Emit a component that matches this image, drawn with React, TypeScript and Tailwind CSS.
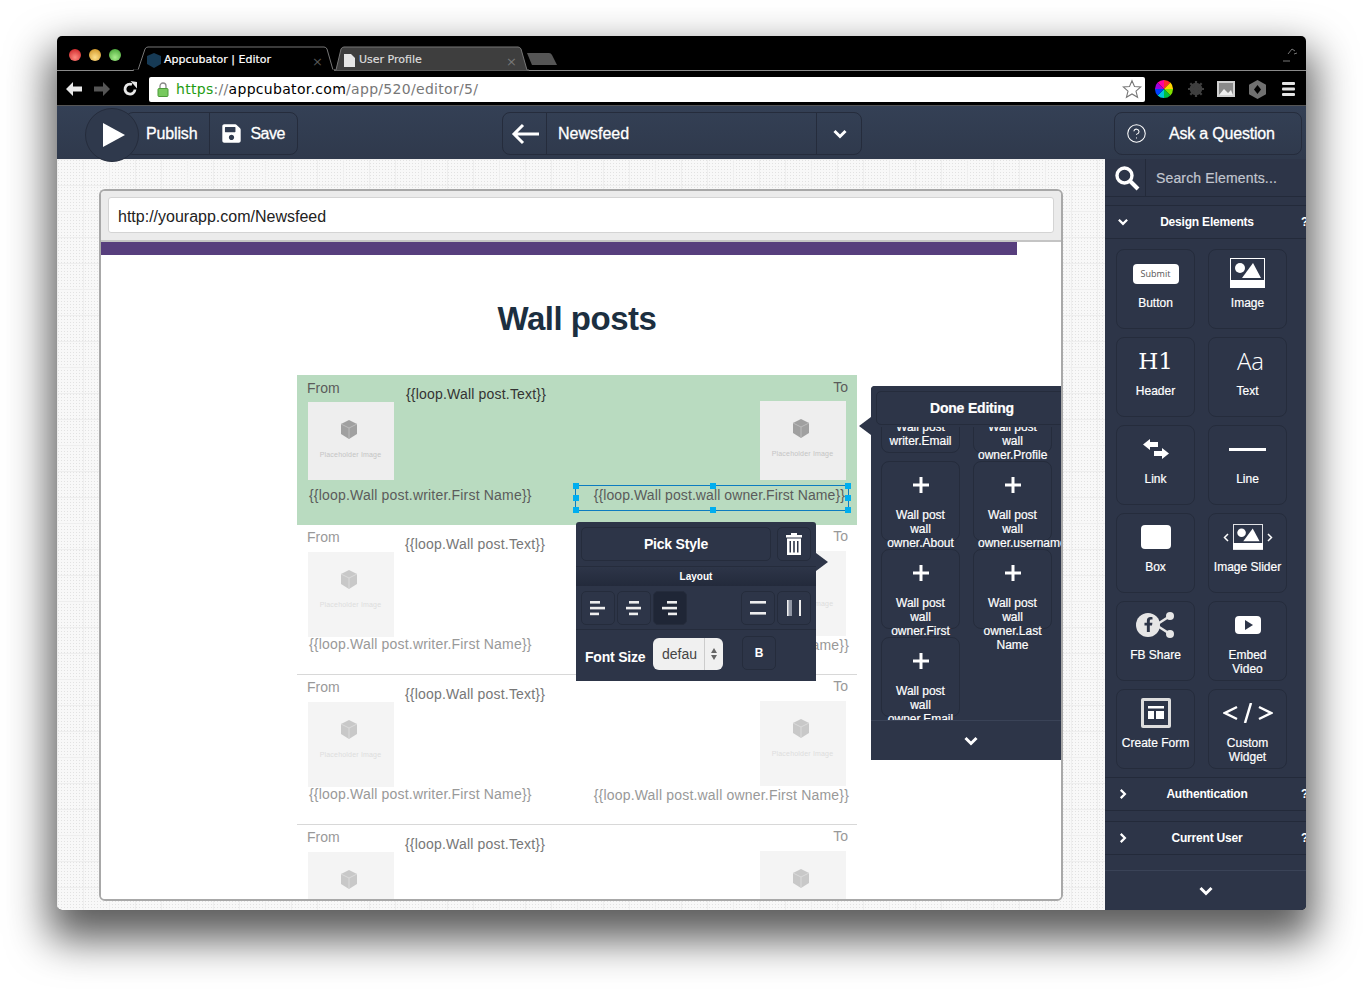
import type { ReactNode } from "react";
import { FaSave, FaFacebookF } from "react-icons/fa";
import { CircleHelp } from "lucide-react";

const Chevron = ({ dir = "down", className = "" }: { dir?: "down" | "right"; className?: string }) => (
  <svg viewBox="0 0 16 16" className={className} fill="none" stroke="white" strokeWidth="3">
    {dir === "down" ? <path d="M2.5 5 8 10.5 13.5 5" /> : <path d="M5 2.5 10.5 8 5 13.5" />}
  </svg>
);

function Tile({ icon, label }: { icon: ReactNode; label: string[] }) {
  return (
    <div className="h-20 w-[79px] rounded-lg border border-[#252c3c] px-[4px] text-center text-xs leading-[14px] text-white [-webkit-text-stroke:0.2px_white]">
      <div className="flex h-[46px] items-center justify-center">{icon}</div>
      {label.map((line) => (
        <div key={line} className="whitespace-nowrap">{line}</div>
      ))}
    </div>
  );
}

const ImageGlyph = ({ w = 35, h = 30 }: { w?: number; h?: number }) => (
  <svg width={w} height={h} viewBox="0 0 35 30">
    <rect width="35" height="30" fill="white" />
    <rect x="1" y="1" width="33" height="21" fill="#2d3548" />
    <circle cx="10" cy="10" r="5" fill="white" />
    <path d="M12 20 23 5 31 20Z" fill="white" />
  </svg>
);

function Placeholder({ height, faded }: { height: number; faded?: boolean }) {
  return (
    <div
      className={`flex w-[86px] flex-col items-center ${faded ? "bg-[#f4f4f4]" : "bg-[#eeeeee]"}`}
      style={{ height }}
    >
      <svg width="18" height="19" viewBox="0 0 18 19" className="-ml-[4px] mt-[18px]">
        <path d="M9 0 17 4 17 14 9 19 1 14 1 4Z" fill={faded ? "#c8c8c8" : "#a0a0a0"} />
        <path d="M1 4 9 8 17 4M9 8V19" fill="none" stroke={faded ? "#dadada" : "#bbbbbb"} strokeWidth="1" />
      </svg>
      <div className={`-ml-[1px] mt-[11px] whitespace-nowrap text-[7px] leading-[9px] ${faded ? "text-[#dddddd]" : "text-[#c4c4c4]"}`}>Placeholder Image</div>
    </div>
  );
}

function WallRow({ selected }: { selected?: boolean }) {
  const tone = selected ? "text-[#5b5b5b]" : "text-[#999999]";
  return (
    <div className={`relative flex h-[150px] border-b tracking-[0.19px] ${selected ? "border-[#b9dbc0] bg-[#b9dbc0]" : "border-[#d8d8d8] bg-white"}`}>
      <div className="w-[108px] shrink-0 pl-[10px]">
        <div className={`h-[27px] text-sm leading-5 tracking-normal ${tone} ${selected ? "pt-[3px]" : "pt-[2px]"}`}>From</div>
        <div className="ml-[1px] h-[85px]">
          <Placeholder height={selected ? 78 : 85} faded={!selected} />
        </div>
        <div className={`ml-[2px] mt-[-3px] whitespace-nowrap text-sm leading-5 ${tone} ${selected ? "pt-[1px]" : ""}`}>
          {"{{loop.Wall post.writer.First Name}}"}
        </div>
      </div>
      <div className={`flex-1 pt-[9px] text-sm leading-5 ${selected ? "pl-[1px] text-[#333333]" : "text-[#777777]"}`}>
        {"{{loop.Wall post.Text}}"}
      </div>
      <div className="flex w-[140px] shrink-0 flex-col items-end pr-[9px]">
        <div className={`h-[26px] text-sm leading-5 tracking-normal ${tone} ${selected ? "pt-[2px]" : "pt-[1px]"}`}>To</div>
        <div className="mr-[2px] h-[85px]">
          <Placeholder height={selected ? 79 : 85} faded={!selected} />
        </div>
        <div className={`-mt-[1px] whitespace-nowrap text-sm leading-5 ${tone} ${selected ? "mr-[3px] tracking-[0.09px]" : "-mr-[1px]"}`}>
          {"{{loop.Wall post.wall owner.First Name}}"}
        </div>
      </div>
      {selected && (
        <div className="absolute left-[278px] top-[110px] h-[26px] w-[274px] border border-[#0c7cc0]">
          {[
            "-left-[3px] -top-[3px]", "left-[134px] -top-[3px]", "-right-[3px] -top-[3px]",
            "-left-[3px] top-[9px]", "-right-[3px] top-[9px]",
            "-left-[3px] -bottom-[3px]", "left-[134px] -bottom-[3px]", "-right-[3px] -bottom-[3px]",
          ].map((pos) => (
            <span key={pos} className={`absolute h-[6px] w-[6px] bg-[#00aeef] ${pos}`} />
          ))}
        </div>
      )}
    </div>
  );
}

const Align = ({ bars }: { bars: [number, number][] }) => (
  <svg width="16" height="16" viewBox="0 0 16 16" fill="#eeeeee">
    {bars.map(([x, w], i) => (
      <rect key={i} x={x} y={1 + i * 5.8} width={w} height="2.6" />
    ))}
  </svg>
);

function SquareBtn({ children, dark }: { children: ReactNode; dark?: boolean }) {
  return (
    <div className={`flex h-[34px] w-[34px] items-center justify-center rounded-[5px] border border-[#252c3c] ${dark ? "bg-[#1f2636]" : ""}`}>
      {children}
    </div>
  );
}

function SidebarSection({ title, open }: { title: string; open?: boolean }) {
  return (
    <div className="relative flex h-[34px] items-center border-y border-[#232a3a] pl-[12px] text-xs font-bold text-white">
      <Chevron dir={open ? "down" : "right"} className="h-3 w-3" />
      <span className="absolute left-0 w-[204px] text-center tracking-[-0.2px]">{title}</span>
      <span className="absolute left-[196px]">?</span>
    </div>
  );
}

export default function App() {
  return (
    <div className="h-[989px] w-[1363px] overflow-hidden bg-white pl-[57px] pt-[36px] font-['Liberation_Sans',sans-serif]">
      <div className="h-[874px] w-[1249px] overflow-hidden rounded-[5px] bg-black shadow-[0_22px_42px_8px_rgba(0,0,0,0.64)]">
        {/* browser tab strip */}
        <div className="relative flex h-[35px] items-end border-b border-[#8a8a8a] pl-[12px]">
          <div className="mb-[9px] flex gap-2">
            <span className="h-3 w-3 rounded-full bg-[radial-gradient(circle_at_50%_70%,#ff8a80,#c8171c)]" />
            <span className="h-3 w-3 rounded-full bg-[radial-gradient(circle_at_50%_70%,#ffe08a,#c98a18)]" />
            <span className="h-3 w-3 rounded-full bg-[radial-gradient(circle_at_50%_70%,#a8ee8c,#3c9c2c)]" />
          </div>
          <div className="relative z-10 -mb-px ml-[12px] flex h-[25px] w-[202px] items-center pt-[4px] font-['DejaVu_Sans',sans-serif] text-[11px] text-white [-webkit-text-stroke:0.2px_white]">
            <svg className="absolute inset-0" width="202" height="25" viewBox="0 0 202 25">
              <path d="M0 24H5L12 3Q13 1 15 1H191Q193 1 194 3L200 24H202V25H0Z" fill="#000" stroke="#777" strokeWidth="1" />
              <path d="M1 24.5H201" stroke="#000" strokeWidth="2" />
            </svg>
            <svg className="relative ml-[14px]" width="14" height="15" viewBox="0 0 14 15">
              <path d="M7 0 14 3V11L7 15 0 11V3Z" fill="#163a55" />
            </svg>
            <span className="relative ml-[3px]">Appcubator | Editor</span>
            <span className="absolute left-[179px] top-[6px] text-[13px] text-[#555555] [-webkit-text-stroke:0px]">×</span>
          </div>
          <div className="relative -mb-px -ml-[4px] flex h-[25px] w-[198px] items-center pt-[4px] font-['DejaVu_Sans',sans-serif] text-[11px] text-[#dddddd] [-webkit-text-stroke:0.2px_#dddddd]">
            <svg className="absolute inset-0" width="198" height="25" viewBox="0 0 198 25">
              <path d="M0 24H5L10 3Q11 1 13 1H187Q189 1 190 3L196 24H198V25H0Z" fill="#3e3e3e" stroke="#777" strokeWidth="1" />
            </svg>
            <svg className="relative ml-[13px]" width="11" height="13" viewBox="0 0 11 13">
              <path d="M0 0H7L11 4V13H0Z" fill="#e6e6e6" />
            </svg>
            <span className="relative ml-[4px]">User Profile</span>
            <span className="absolute left-[175px] top-[6px] text-[13px] text-[#777777] [-webkit-text-stroke:0px]">×</span>
          </div>
          <svg className="-ml-[2px] mb-[4px]" width="32" height="14" viewBox="0 0 32 14">
            <path d="M0 1H22Q24 1 25 3L30 13H5Z" fill="#555555" />
          </svg>
          <svg className="absolute right-[8px] top-[10px]" width="16" height="16" viewBox="0 0 16 16" fill="none" stroke="#777" strokeWidth="1">
            <path d="M1 15H8M6 8 10 3 13 5M12 8 15 7" />
          </svg>
        </div>

        {/* browser toolbar */}
        <div className="flex h-[35px] items-center border-b border-[#555555] pl-[9px] pt-[2px]">
          <svg width="16" height="14" viewBox="0 0 16 14" fill="#e8e8e8">
            <path d="M7 0 0 7 7 14V9.5H16V4.500H7Z" />
          </svg>
          <svg className="ml-[12px]" width="16" height="14" viewBox="0 0 16 14" fill="#555555">
            <path d="M9 0 16 7 9 14V9.5H0V4.500H9Z" />
          </svg>
          <svg className="ml-[12px]" width="16" height="16" viewBox="0 0 16 16" fill="none">
            <path d="M13 8.500A5 5 0 1 1 10 3.500" stroke="#e8e8e8" strokeWidth="2.800" />
            <path d="M8.500 0 15 1V7.500Z" fill="#e8e8e8" />
          </svg>
          <div className="ml-[11px] flex h-[25px] w-[996px] items-center rounded-[2px] bg-white pl-[8px] font-['DejaVu_Sans',sans-serif] text-[14px] tracking-[0.3px]">
            <svg width="12" height="15" viewBox="0 0 12 15" fill="none">
              <path d="M3 7V4A3 3 0 0 1 9 4V7" stroke="#888" strokeWidth="1.300" />
              <rect x="1" y="6.500" width="10" height="8" rx="1" fill="#77c95e" stroke="#4d9a3a" />
            </svg>
            <span className="ml-[7px] text-[#1f9c12]">https</span>
            <span className="text-[#777777]">://</span>
            <span className="text-black">appcubator.com</span>
            <span className="text-[#777777]">/app/520/editor/5/</span>
            <svg className="ml-auto mr-[3px]" width="20" height="20" viewBox="0 0 24 24" fill="none" stroke="#777" strokeWidth="1.300">
              <path d="M12 2 15 9 22.500 9.500 16.800 14.500 18.700 22 12 18 5.300 22 7.200 14.500 1.500 9.500 9 9Z" />
            </svg>
          </div>
          <svg className="ml-[10px]" width="18" height="18" viewBox="0 0 18 18">
            <path d="M9 9 9 0A9 9 0 0 1 15.400 2.600Z" fill="#ff2a2a" />
            <path d="M9 9 15.400 2.600A9 9 0 0 1 18 9Z" fill="#ffd400" />
            <path d="M9 9H18A9 9 0 0 1 15.400 15.400Z" fill="#7fe000" />
            <path d="M9 9 15.400 15.400A9 9 0 0 1 9 18Z" fill="#00c040" />
            <path d="M9 9V18A9 9 0 0 1 2.600 15.400Z" fill="#00c8d8" />
            <path d="M9 9 2.600 15.400A9 9 0 0 1 0 9Z" fill="#0040ff" />
            <path d="M9 9H0A9 9 0 0 1 2.600 2.600Z" fill="#a000e0" />
            <path d="M9 9 2.600 2.600A9 9 0 0 1 9 0Z" fill="#ff00a0" />
          </svg>
          <svg className="ml-[15px]" width="16" height="16" viewBox="0 0 16 16">
            <circle cx="8" cy="8" r="4.500" fill="none" stroke="#3f3f3f" strokeWidth="3.500" />
            <path d="M8 0V16M0 8H16M2.300 2.300 13.700 13.700M13.700 2.300 2.300 13.700" stroke="#3f3f3f" strokeWidth="2.200" />
          </svg>
          <svg className="ml-[13px]" width="18" height="16" viewBox="0 0 18 16">
            <rect width="18" height="16" fill="#d0d0d0" />
            <rect x="2" y="2" width="14" height="12" fill="#8a8a8a" />
            <path d="M2 14 7 8 11 12 14 9 16 14Z" fill="#eeeeee" />
          </svg>
          <svg className="ml-[14px]" width="17" height="19" viewBox="0 0 17 19">
            <path d="M8.500 0 17 4.800V14.200L8.500 19 0 14.200V4.800Z" fill="#707070" />
            <path d="M8.500 5 12 9.500 8.500 14 5 9.500Z" fill="#000" />
          </svg>
          <svg className="ml-[16px]" width="13" height="14" viewBox="0 0 13 14" fill="#e4e4e4">
            <rect width="13" height="3" rx="1" />
            <rect y="5.500" width="13" height="3" rx="1" />
            <rect y="11" width="13" height="3" rx="1" />
          </svg>
        </div>

        {/* app header */}
        <div className="relative flex h-[53px] items-center bg-[linear-gradient(#344055,#2f394c)] pt-[2px] text-base text-white [-webkit-text-stroke:0.3px_white]">
          <div className="ml-[68px] flex h-[43px] w-[173px] items-center rounded-[8px] border border-[#252c3c]">
            <span className="ml-[20px] tracking-[-0.15px]">Publish</span>
            <span className="ml-[12px] flex h-full items-center border-l border-[#252c3c] pl-[11px]">
              <FaSave size={21} />
              <span className="ml-[8px] tracking-[-0.5px]">Save</span>
            </span>
          </div>
          <div className="absolute left-[28px] top-[2px] flex h-[54px] w-[54px] items-center justify-center rounded-full border border-[#252c3c] bg-[#2f394c]">
            <svg width="22" height="24" viewBox="0 0 22 24" fill="white" className="ml-[3px]"><path d="M0 0 22 12 0 24Z" /></svg>
          </div>
          <div className="ml-[204px] flex h-[43px] w-[360px] items-center rounded-[8px] border border-[#252c3c]">
            <span className="flex h-full w-[44px] items-center justify-center border-r border-[#252c3c]">
              <svg width="28" height="22" viewBox="0 0 28 22" fill="none" stroke="white" strokeWidth="3"><path d="M12 2 3 11 12 20M3 11H28" /></svg>
            </span>
            <span className="ml-[11px]">Newsfeed</span>
            <span className="ml-auto flex h-full w-[45px] items-center justify-center border-l border-[#252c3c] pl-[1px]">
              <Chevron className="h-4 w-4" />
            </span>
          </div>
          <div className="ml-[252px] flex h-[43px] w-[188px] items-center rounded-[8px] border border-[#252c3c]">
            <CircleHelp className="ml-[11px]" size={21} strokeWidth={1.2} />
            <span className="ml-[22px] tracking-[-0.2px]">Ask a Question</span>
          </div>
        </div>

        <div className="flex h-[751px]">
          {/* canvas */}
          <div className="h-full w-[1048px] shrink-0 bg-[#f8f8f8] bg-[linear-gradient(#eeeeee_1px,transparent_1px),linear-gradient(90deg,#eeeeee_1px,transparent_1px),radial-gradient(#e2e2e2_0.6px,transparent_0.8px)] bg-[size:26px_26px,26px_26px,3px_3px] pl-[42px] pt-[30px]">
            <div className="h-[712px] w-[964px] overflow-hidden rounded-[6px] border-2 border-[#a8a8a8]">
              <div className="relative h-full w-full overflow-hidden">
                <div className="h-[51px] border-b-2 border-[#c4c4c4] bg-[#ebebeb] px-[7px] pt-[6px]">
                  <div className="flex h-[36px] items-center rounded-[3px] border border-[#d4d4d4] bg-white pl-[9px] pt-[3px] text-base text-[#222222]">http://yourapp.com/Newsfeed</div>
                </div>
                <div className="h-full bg-white">
                  <div className="h-[13px] w-[916px] bg-[#573e7d]" />
                  <div className="ml-[196px] w-[560px]">
                    <h1 className="h-[120px] pt-[44px] text-center text-[33px] font-bold leading-10 tracking-[-0.5px] text-[#1c2f40]">Wall posts</h1>
                    <WallRow selected />
                    <WallRow />
                    <WallRow />
                    <WallRow />
                  </div>
                </div>

                {/* element style popover */}
                <div className="absolute left-[475px] top-[331px] h-[159px] w-[240px] rounded-t-[3px] bg-[#2d3548] text-white">
                  <div className="flex gap-[6px] px-[5px] pt-[5px]">
                    <div className="flex h-[34px] w-[190px] items-center justify-center rounded-[5px] border border-[#252c3c] text-sm font-bold tracking-[-0.2px]">Pick Style</div>
                    <SquareBtn>
                      <svg width="16" height="22" viewBox="0 0 16 22" fill="white">
                        <path d="M5 0H11V2H16V4.500H0V2H5Z" />
                        <path fillRule="evenodd" d="M1 5.500H15V22H1ZM3.500 8V19.500H5V8ZM7.200 8V19.500H8.800V8ZM11 8V19.500H12.500V8Z" />
                      </svg>
                    </SquareBtn>
                  </div>
                  <div className="mt-[5px] flex h-[20px] items-center justify-center border-t border-[#252c3c] bg-[linear-gradient(#2d3548,#232a3b)] text-[10px] font-bold">Layout</div>
                  <div className="flex h-[44px] items-center border-b border-[#252c3c] px-[5px]">
                    <div className="flex gap-[2px]">
                      <SquareBtn><Align bars={[[0, 10], [0, 15], [0, 9]]} /></SquareBtn>
                      <SquareBtn><Align bars={[[3, 10], [0, 15], [3, 9]]} /></SquareBtn>
                      <SquareBtn dark><Align bars={[[5, 10], [0, 15], [6, 9]]} /></SquareBtn>
                    </div>
                    <div className="ml-auto flex gap-[2px]">
                      <SquareBtn>
                        <svg width="16" height="16" viewBox="0 0 16 16" fill="#eeeeee"><rect width="16" height="2.600" y="1" /><rect width="16" height="2.600" y="12" /></svg>
                      </SquareBtn>
                      <SquareBtn>
                        <svg width="16" height="16" viewBox="0 0 16 16">
                          <rect x="1" width="5" height="16" fill="#8f95a3" />
                          <rect x="1" width="1.500" height="16" fill="#eeeeee" />
                          <rect x="13" width="2" height="16" fill="#eeeeee" />
                        </svg>
                      </SquareBtn>
                    </div>
                  </div>
                  <div className="flex items-start">
                    <span className="ml-[9px] mt-[17px] w-[60px] whitespace-nowrap text-sm font-bold leading-5 tracking-[-0.2px]">Font Size</span>
                    <div className="ml-[8px] mt-[8px] flex h-[32px] w-[70px] items-center rounded-[6px] bg-[#f0f0f0] pl-[9px] text-sm text-[#444444]">
                      <span>defau</span>
                      <span className="ml-auto flex h-full w-[19px] flex-col items-center justify-center gap-[2px] border-l border-[#cccccc]">
                        <span className="h-0 w-0 border-x-[3.5px] border-b-[5px] border-x-transparent border-b-[#666666]" />
                        <span className="h-0 w-0 border-x-[3.5px] border-t-[5px] border-x-transparent border-t-[#666666]" />
                      </span>
                    </div>
                    <div className="ml-[19px] mt-[6px]">
                      <SquareBtn><span className="text-xs font-bold">B</span></SquareBtn>
                    </div>
                  </div>
                </div>
                <span className="absolute left-[715px] top-[362px] h-0 w-0 border-y-[9px] border-l-[12px] border-y-transparent border-l-[#2d3548]" />

                {/* field list popover */}
                <span className="absolute left-[758px] top-[226px] h-0 w-0 border-y-[9px] border-r-[12px] border-y-transparent border-r-[#2d3548]" />
                <div className="absolute left-[770px] top-[195px] h-[374px] w-[190px] overflow-hidden rounded-tl-[4px] bg-[#2d3548]">
                  <div className="relative z-10 h-[41px] bg-[#2d3548] pl-[5px] pt-[5px]">
                    <div className="flex h-[34px] w-[220px] items-center rounded-[5px] border border-[#252c3c] pl-[53px] text-sm font-bold tracking-[-0.2px] text-white [-webkit-text-stroke:0.2px_white]">Done Editing</div>
                  </div>
                  <div className="-mt-[54px] grid h-[347px] grid-cols-[79px_79px] content-start gap-x-[13px] gap-y-2 pl-[10px]">
                    {[
                      ["Wall post", "writer.Email"],
                      ["Wall post", "wall", "owner.Profile"],
                      ["Wall post", "wall", "owner.About"],
                      ["Wall post", "wall", "owner.username"],
                      ["Wall post", "wall", "owner.First"],
                      ["Wall post", "wall", "owner.Last", "Name"],
                      ["Wall post", "wall", "owner.Email"],
                    ].map((label) => (
                      <Tile
                        key={label.join()}
                        label={label}
                        icon={<svg width="16" height="16" viewBox="0 0 16 16" fill="white"><path d="M6.500 0H9.500V6.500H16V9.500H9.500V16H6.500V9.500H0V6.500H6.500Z" /></svg>}
                      />
                    ))}
                  </div>
                  <div className="absolute bottom-0 left-0 flex h-[40px] w-[200px] items-center justify-center border-t border-[#3a4357] bg-[#2d3548]">
                    <Chevron className="h-4 w-4" />
                  </div>
                </div>
              </div>
            </div>
          </div>

          {/* elements sidebar */}
          <div className="relative h-full w-[201px] shrink-0 overflow-hidden bg-[#2d3548]">
            <div className="flex h-[38px] items-center border-b border-[#232a3a]">
              <svg className="ml-[9px]" width="26" height="26" viewBox="0 0 26 26" fill="none" stroke="white">
                <circle cx="10.500" cy="10.500" r="7.500" strokeWidth="3.400" />
                <path d="M16 16 24 24" strokeWidth="4" />
              </svg>
              <span className="ml-[5px] flex h-full items-center border-l border-[#232a3a] pl-[10px] text-sm tracking-[0.15px] text-[#c2c6cf] [-webkit-text-stroke:0.2px_#c2c6cf]">Search Elements...</span>
            </div>
            <div className="mt-[8px]"><SidebarSection title="Design Elements" open /></div>
            <div className="ml-[11px] mt-[10px] grid w-[172px] grid-cols-[79px_79px] gap-x-[13px] gap-y-2">
              <Tile
                label={["Button"]}
                icon={<span className="mt-[2px] flex h-5 w-[46px] shrink-0 items-center justify-center rounded-[4px] bg-white font-['Open_Sans',sans-serif] text-[9px] text-[#555555] [-webkit-text-stroke:0px]">Submit</span>}
              />
              <Tile label={["Image"]} icon={<ImageGlyph />} />
              <Tile label={["Header"]} icon={<span className="font-['DejaVu_Serif',serif] text-[23px] font-normal [-webkit-text-stroke:0px]">H1</span>} />
              <Tile label={["Text"]} icon={<span className="ml-[6px] font-['Open_Sans',sans-serif] text-2xl font-light [-webkit-text-stroke:0px]">Aa</span>} />
              <Tile
                label={["Link"]}
                icon={
                  <svg width="26" height="20" viewBox="0 0 26 20" fill="white">
                    <path d="M0 5.500 7 0V3H15V8H7V11Z" />
                    <path d="M26 14.500 19 20V17H11V12H19V9Z" />
                  </svg>
                }
              />
              <Tile label={["Line"]} icon={<span className="h-[3px] w-[37px] shrink-0 bg-white" />} />
              <Tile label={["Box"]} icon={<span className="h-6 w-[30px] rounded-[4px] bg-white" />} />
              <Tile
                label={["Image Slider"]}
                icon={
                  <span className="flex items-center gap-[4px]">
                    <svg width="6" height="9" viewBox="0 0 6 9" fill="none" stroke="white" strokeWidth="1.500"><path d="M5 1 1.500 4.500 5 8" /></svg>
                    <ImageGlyph w={30} h={26} />
                    <svg width="6" height="9" viewBox="0 0 6 9" fill="none" stroke="white" strokeWidth="1.500"><path d="M1 1 4.500 4.500 1 8" /></svg>
                  </span>
                }
              />
              <Tile
                label={["FB Share"]}
                icon={
                  <span className="relative h-[26px] w-[40px] shrink-0">
                    <svg width="40" height="26" viewBox="0 0 40 26" fill="#e6e6e6">
                      <path d="M20 13 34 4M20 13 34 22" stroke="#e6e6e6" strokeWidth="2.500" />
                      <circle cx="34" cy="4" r="4" />
                      <circle cx="34" cy="22" r="4" />
                      <circle cx="12" cy="13" r="12" />
                    </svg>
                    <FaFacebookF className="absolute left-[5px] top-[5px] text-[#2d3548]" size={15} />
                  </span>
                }
              />
              <Tile
                label={["Embed", "Video"]}
                icon={
                  <svg width="26" height="18" viewBox="0 0 26 18">
                    <rect width="26" height="18" rx="4" fill="white" />
                    <path d="M10 4 18 9 10 14Z" fill="#2d3548" />
                  </svg>
                }
              />
              <Tile
                label={["Create Form"]}
                icon={
                  <svg width="30" height="30" viewBox="0 0 30 30">
                    <rect width="30" height="30" rx="2" fill="#dddddd" />
                    <rect x="3" y="3" width="24" height="24" fill="#2d3548" />
                    <rect x="7" y="8" width="16" height="2.500" fill="white" />
                    <rect x="7" y="13" width="6" height="8" fill="white" />
                    <rect x="15" y="13" width="8" height="8" fill="white" />
                  </svg>
                }
              />
              <Tile
                label={["Custom", "Widget"]}
                icon={
                  <svg className="shrink-0" width="50" height="20" viewBox="0 0 50 20" fill="none" stroke="white" strokeWidth="2.500">
                    <path d="M14 4 2 10 14 16M36 4 48 10 36 16M28 0 22 20" />
                  </svg>
                }
              />
            </div>
            <div className="mt-[8px]"><SidebarSection title="Authentication" /></div>
            <div className="mt-[10px]"><SidebarSection title="Current User" /></div>
            <div className="absolute bottom-0 left-0 flex h-[40px] w-full items-center justify-center border-t border-[#3a4357] bg-[#2d3548]">
              <Chevron className="h-4 w-4" />
            </div>
          </div>
        </div>
      </div>
    </div>
  );
}
